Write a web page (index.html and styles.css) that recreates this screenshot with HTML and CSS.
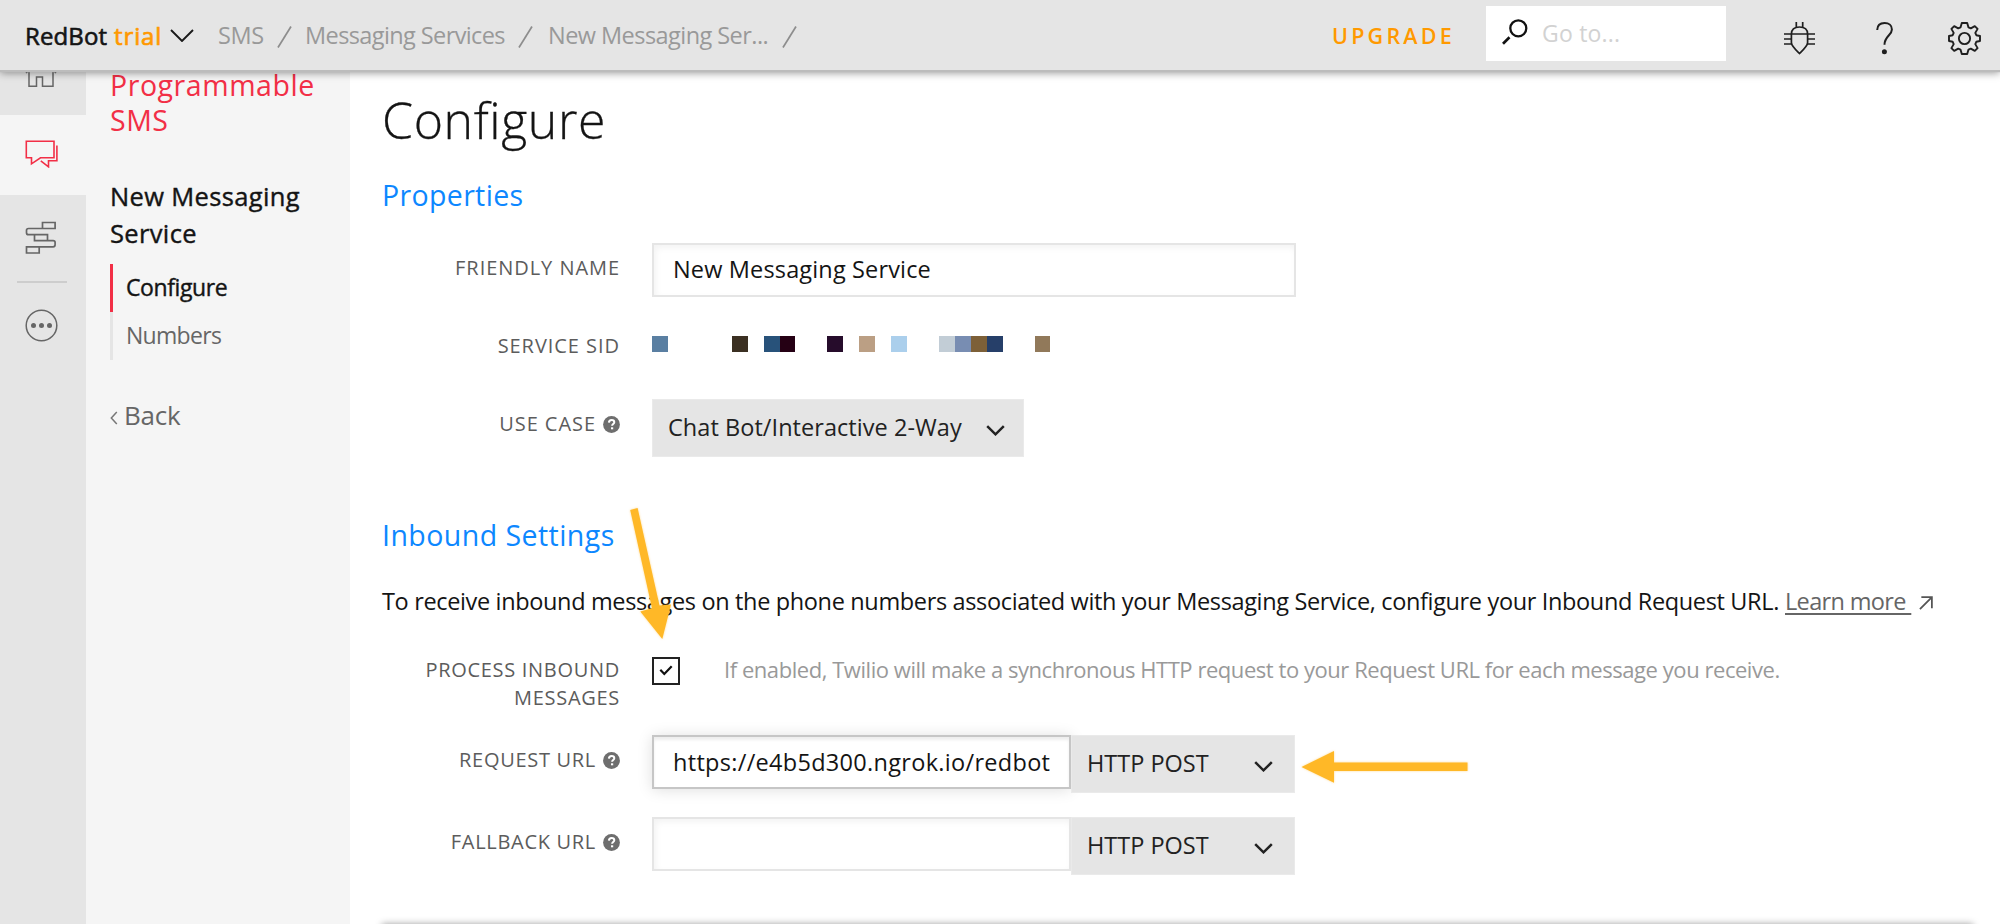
FILE: index.html
```html
<!DOCTYPE html>
<html lang="en">
<head>
<meta charset="utf-8">
<title>Configure - New Messaging Service</title>
<link rel="stylesheet" href="styles.css">
</head>
<body>
<svg class="defs" width="0" height="0" aria-hidden="true">
  <symbol id="help" viewBox="0 0 17 17"><circle cx="8.5" cy="8.5" r="8.4" fill="#6e6e6e"/><path d="M5.900 6.600C6 4.900 7 4 8.600 4c1.500 0 2.700.9 2.700 2.300 0 1.700-2.200 1.900-2.200 3.500" fill="none" stroke="#fff" stroke-width="2"/><rect x="8" y="11.300" width="2.200" height="2" fill="#fff"/></symbol>
  <symbol id="chevron" viewBox="0 0 19 11"><path d="M1.200 1.200 9.500 9.300 17.800 1.200" fill="none" stroke="#222" stroke-width="2.500"/></symbol>
</svg>

<header class="topbar">
  <div class="account"><span class="account-name">RedBot</span><span class="account-type">trial</span>
    <svg class="account-chevron" width="24" height="13" viewBox="0 0 24 13"><path d="M1 1 12 12 23 1" fill="none" stroke="#1a1a1a" stroke-width="1.900"/></svg>
  </div>
  <nav class="crumbs">
    <span class="crumb crumb-sms">SMS</span><svg class="slash" width="15" height="22"><path d="M1 21.500 14 .5"/></svg>
    <span class="crumb crumb-services">Messaging Services</span><svg class="slash" width="15" height="22"><path d="M1 21.500 14 .5"/></svg>
    <span class="crumb crumb-service">New Messaging Ser...</span><svg class="slash" width="15" height="22"><path d="M1 21.500 14 .5"/></svg>
  </nav>
  <a class="upgrade">UPGRADE</a>
  <div class="search">
    <svg width="26" height="26" viewBox="0 0 26 26" fill="none" stroke="#111" stroke-width="2.300"><circle cx="16.300" cy="9.300" r="8"/><path d="M7.500 18.200 1 24.800" stroke-width="2.700"/></svg>
    <span>Go to...</span>
  </div>
  <div class="tools">
    <svg width="31" height="33" viewBox="0 0 31 33" fill="none" stroke="#1f1f1f" stroke-width="1.700"><path d="M12.300 0v5.500M18.700 0v5.500M7.400 12C7.400 7.500 10 5 15.500 5s8.100 2.500 8.100 7v8.500c0 3.500-4.500 7.500-8.100 11-3.600-3.500-8.100-7.500-8.100-11zM0 12h31M0 17h7.400M0 22h7.400M23.600 17H31M23.600 22H31"/></svg>
    <svg width="17" height="33" viewBox="0 0 17 33"><path d="M1.200 8C1.300 3.500 4.200 1 8.600 1c4.400 0 7.300 2.600 7.300 6.400 0 6-7.400 6.600-7.400 15.300" fill="none" stroke="#1f1f1f" stroke-width="2"/><circle cx="8.400" cy="29.700" r="2.500" fill="#1f1f1f"/></svg>
    <svg width="33" height="33" viewBox="0 0 33 33" fill="none" stroke="#1f1f1f" stroke-width="1.900" stroke-linejoin="round"><path d="M13.800 1h5.400l1.300 4.400 2.300 1 4-2.300 2.800 2.800-2.300 4 1 2.300L32 14v5l-3.700.8-1 2.300 2.300 4-2.800 2.800-4-2.300-2.300 1L19.200 32h-5.400l-1.300-4.400-2.300-1-4 2.300-2.800-2.800 2.300-4-1-2.300L1 19v-5l3.700-.8 1-2.300-2.300-4 2.800-2.800 4 2.300 2.300-1z"/><circle cx="16.500" cy="16.500" r="5.600"/></svg>
  </div>
</header>

<div class="layout">
  <aside class="rail">
    <div class="rail-item rail-home"><svg width="32" height="32" viewBox="0 0 32 32" fill="none" stroke="#666" stroke-width="1.500"><path d="M1 17 16 2l15 15M4 16v14.300h7.500V21h6v9.300H28V16"/></svg></div>
    <div class="rail-item rail-active"><svg width="34" height="28" viewBox="0 0 34 28" fill="none" stroke="#f22f46" stroke-width="1.600"><path d="M1.300 1.200H29V17.800H15.500L6.500 23.800V17.800H1.300zM31.900 5.500V20.800H23.500V26.800L15.800 20.800"/></svg></div>
    <div class="rail-item rail-studio"><svg width="32" height="34" viewBox="0 0 32 34" fill="none" stroke="#666" stroke-width="1.700"><path d="M17.500 1.500h12.600v6H17.500zM17.500 7.500h-14q-2 0-2 2v2.200q0 2 2 2h18M9.500 13.700h13v5.900h-13zM22.500 19.600h5.600q2 0 2 2v2.200q0 2-2 2H14.500M1.500 25.800h12.700V32H1.500zM9.500 19.600h13"/></svg></div>
    <div class="rail-rule"></div>
    <div class="rail-item rail-more"><svg width="33" height="33" viewBox="0 0 33 33"><circle cx="16.500" cy="16.500" r="15.300" fill="none" stroke="#666" stroke-width="1.500"/><g fill="#666"><circle cx="8.500" cy="16.500" r="2.500"/><circle cx="16.500" cy="16.500" r="2.500"/><circle cx="24.500" cy="16.500" r="2.500"/></g></svg></div>
  </aside>

  <aside class="panel">
    <div class="product">Programmable<br>SMS</div>
    <div class="service">New Messaging<br>Service</div>
    <nav class="subnav">
      <a class="subnav-item is-current">Configure</a>
      <a class="subnav-item">Numbers</a>
    </nav>
    <a class="back"><svg width="8" height="14" viewBox="0 0 8 14"><path d="M6.800 1 1.300 7l5.500 6" fill="none" stroke="#777" stroke-width="1.500"/></svg>Back</a>
  </aside>

  <main class="content">
    <h1>Configure</h1>
    <h2 class="h-properties">Properties</h2>
    <div class="form">
      <div class="row">
        <label>FRIENDLY NAME</label>
        <div class="input input-wide">New Messaging Service</div>
      </div>
      <div class="row">
        <label>SERVICE SID</label>
        <div class="sid">
          <i class="c0"></i><i class="c5"></i><i class="c7"></i><i class="c8"></i><i class="c11"></i><i class="c13"></i><i class="c15"></i><i class="c18"></i><i class="c19"></i><i class="c20"></i><i class="c21"></i><i class="c24"></i>
        </div>
      </div>
      <div class="row">
        <label>USE CASE<svg class="help"><use href="#help"/></svg></label>
        <div class="select select-case">Chat Bot/Interactive 2-Way<svg class="chev"><use href="#chevron"/></svg></div>
      </div>
    </div>

    <h2 class="h-inbound">Inbound Settings</h2>
    <p class="intro"><span class="intro-text">To receive inbound messages on the phone numbers associated with your Messaging Service, configure your Inbound Request URL.</span><a class="learn">Learn more&nbsp;</a><svg width="14" height="14" viewBox="0 0 15 15" fill="none" stroke="#555" stroke-width="1.900"><path d="M1 14 13.600 1.400M2.500 1.200h11.300V13"/></svg></p>

    <div class="form">
      <div class="row row-process">
        <label>PROCESS INBOUND<br>MESSAGES</label>
        <div class="check-line">
          <span class="checkbox"><svg width="14" height="11" viewBox="0 0 14 11"><path d="M1.300 4.800 5.300 9 12.700 1.300" fill="none" stroke="#111" stroke-width="2.200"/></svg></span>
          <span class="hint">If enabled, Twilio will make a synchronous HTTP request to your Request URL for each message you receive.</span>
        </div>
      </div>
      <div class="row row-url">
        <label>REQUEST URL<svg class="help"><use href="#help"/></svg></label>
        <div class="combo">
          <div class="input input-url is-focused">https://e4b5d300.ngrok.io/redbot</div>
          <div class="select select-method">HTTP POST<svg class="chev"><use href="#chevron"/></svg></div>
        </div>
      </div>
      <div class="row row-url">
        <label>FALLBACK URL<svg class="help"><use href="#help"/></svg></label>
        <div class="combo">
          <div class="input input-url"></div>
          <div class="select select-method">HTTP POST<svg class="chev"><use href="#chevron"/></svg></div>
        </div>
      </div>
    </div>
    <div class="next-card"></div>
  </main>
</div>

<svg class="callouts" width="2000" height="924" viewBox="0 0 2000 924" fill="#ffb827"><path d="M630.200 510 637.600 508 659.500 605.500 671 604.500 662.300 639 640.300 611.500 652 608.300z"/><path d="M1301.500 767 1334 751v11.500h133.500v8.500H1334v11.700z"/></svg>
</body>
</html>
```
FILE: styles.css
```css
* { box-sizing: border-box; }
body {
  margin: 0;
  width: 2000px;
  height: 924px;
  overflow: hidden;
  position: relative;
  background: #fff;
  color: #141414;
  font-family: "Open Sans", "Noto Sans", sans-serif;
}
svg { display: block; flex: none; }
.defs { position: absolute; }

/* Top bar */
.topbar {
  position: relative;
  z-index: 2;
  display: flex;
  align-items: center;
  height: 70px;
  padding-left: 25px;
  background: #e5e5e5;
  box-shadow: 0 2px 1px #bcbcbc, 0 3px 8px rgba(0, 0, 0, .4);
  white-space: nowrap;
}
.account { display: flex; align-items: center; width: 193px; font-size: 24px; -webkit-text-stroke: .6px; }
.account-name { width: 89px; letter-spacing: .1px; }
.account-type { width: 56px; color: #ff9900; letter-spacing: .9px; -webkit-text-stroke: .7px #ff9900; }
.account-chevron { margin-top: 1px; }
.crumbs { display: flex; align-items: center; width: 1114px; font-size: 23.500px; color: #999; }
.crumb-sms { width: 59px; letter-spacing: -.4px; }
.crumb-services { width: 213px; margin-left: 13px; letter-spacing: -.6px; }
.crumb-service { width: 234px; margin-left: 15px; letter-spacing: -.55px; }
.slash { fill: none; stroke: #8d8d8d; stroke-width: 1.700; margin-top: 3px; }
.upgrade { width: 154px; font-size: 21.500px; font-weight: 600; letter-spacing: 3.200px; color: #ff9900; }
.search { display: flex; width: 240px; height: 55px; margin-top: -4px; padding: 13px 0 0 16px; background: #fff; color: #d2d2d2; font-size: 23px; line-height: 30px; letter-spacing: .2px; }
.search span { margin: -1px 0 0 14px; }
.tools { display: flex; margin: 6px 0 0 58px; }
.tools svg + svg { margin-left: 61px; }
.tools svg:last-child { margin-left: 54.500px; }

/* Columns */
.layout { display: flex; height: 854px; }
.rail { display: flex; flex-direction: column; width: 86px; background: #e5e5e5; }
.rail-item { display: flex; justify-content: center; padding-right: 4px; }
.rail-home { height: 45px; align-items: flex-end; padding-bottom: 27px; }
.rail-active { height: 80px; padding: 25px 3px 0 0; background: #f5f5f5; }
.rail-studio { height: 86px; padding-top: 26px; }
.rail-rule { flex: none; width: 50px; height: 2px; margin-left: 17px; background: #cdcdcd; }
.rail-more { padding-top: 26px; }

.panel { width: 264px; padding-left: 24px; background: #f5f5f5; }
.product { margin-top: -2px; color: #f22f46; font-size: 28.500px; line-height: 35px; letter-spacing: .55px; }
.service { margin-top: 40px; font-size: 25.500px; line-height: 36.500px; letter-spacing: .35px; -webkit-text-stroke: .4px; }
.subnav { margin-top: 12.500px; font-size: 23px; }
.subnav-item { display: block; height: 48px; padding-left: 13px; border-left: 3px solid #e5e5e5; line-height: 47px; letter-spacing: -.7px; color: #666; }
.subnav-item.is-current { border-left-color: #f22f46; color: #141414; letter-spacing: -.4px; -webkit-text-stroke: .4px; }
.back { display: flex; align-items: center; gap: 6px; margin-top: 37px; font-size: 26px; line-height: 36px; letter-spacing: -.2px; color: #666; }
.back svg { margin-top: 7px; }

/* Content */
.content { width: 1650px; padding-left: 32px; }
h1, h2, p { margin: 0; font-weight: 400; }
h1 { margin-top: 20px; font-size: 50px; line-height: 60px; font-weight: 300; letter-spacing: .6px; -webkit-text-stroke: .3px; }
h2 { font-size: 28.500px; line-height: 36px; color: #0d87ff; letter-spacing: .35px; }
.h-properties { margin-top: 27px; }
.h-inbound { margin-top: 60px; letter-spacing: .45px; }
.form { display: grid; gap: 24px; }
.h-properties + .form { margin-top: 30px; }
.row { display: grid; grid-template-columns: 238px 1fr; column-gap: 32px; min-height: 54px; }
.row label { display: block; padding-top: 10.500px; text-align: right; font-size: 20px; line-height: 27.500px; letter-spacing: .95px; color: #5c5c5c; white-space: nowrap; }
.row-url label { letter-spacing: .7px; }
.help { display: inline-block; width: 17px; height: 17px; margin-left: 7px; vertical-align: -2px; }
.input { height: 54px; padding-left: 19px; border: 2px solid #e5e5e5; background: #fff; box-shadow: inset 2px 3px 6px rgba(0, 0, 0, .05); font-size: 23.500px; line-height: 48px; letter-spacing: .15px; white-space: nowrap; overflow: hidden; }
.input-wide { width: 644px; }
.input-url { width: 419px; letter-spacing: .3px; }
.input-url.is-focused { border-color: #c6c6c6; box-shadow: 0 1px 14px rgba(0, 0, 0, .13), inset 0 3px 3px rgba(0, 0, 0, .07); line-height: 50px; }
.combo { display: flex; }
.select { display: flex; justify-content: space-between; align-items: center; background: #e5e5e5; border: 1px solid #eaeaea; font-size: 23.500px; color: #222; white-space: nowrap; z-index: 1; }
.chev { width: 19px; height: 11px; margin-top: 7px; }
.select-case { width: 372px; height: 58px; padding: 0 18px 2px 15px; letter-spacing: .05px; }
.select-method { width: 224px; height: 58px; padding: 0 21px 2px 15px; }

.sid { display: grid; grid-template-columns: repeat(25, 15.950px); height: 16px; margin-top: 15px; }
.sid i { grid-row: 1; height: 16px; }
.c0 { grid-column: 1; background: #5a7fa2; }
.c5 { grid-column: 6; background: #3b3022; }
.c7 { grid-column: 8; background: #28527a; }
.c8 { grid-column: 9; background: #250014; }
.c11 { grid-column: 12; background: #260c2b; }
.c13 { grid-column: 14; background: #bb9f84; }
.c15 { grid-column: 16; background: #abcfec; }
.c18 { grid-column: 19; background: #c2cdd6; }
.c19 { grid-column: 20; background: #788db2; }
.c20 { grid-column: 21; background: #7d6038; }
.c21 { grid-column: 22; background: #263f69; }
.c24 { grid-column: 25; background: #91795a; }

.intro { display: flex; align-items: center; margin-top: 32px; font-size: 23.500px; line-height: 32px; white-space: nowrap; }
.intro-text { width: 1403px; letter-spacing: -.35px; }
.learn { width: 125px; margin-right: 9px; color: #666; letter-spacing: -.65px; text-decoration: underline; text-decoration-thickness: 2px; text-underline-offset: 3px; }
.intro svg { margin-top: 3px; }
.intro + .form { margin-top: 28.500px; }
.row-process { height: 65.500px; }
.row-process label { letter-spacing: .7px; }
.check-line { display: flex; align-items: flex-start; }
.checkbox { display: grid; place-items: center; width: 28px; height: 28px; margin: 11px 44px 0 0; border: 2px solid #222; }
.hint { margin-top: 10px; font-size: 22px; line-height: 27.500px; letter-spacing: -.45px; color: #999; white-space: nowrap; }
.next-card { width: 1591px; height: 20px; margin-top: 49px; background: #fff; box-shadow: 0 0 7px rgba(0, 0, 0, .38); }

.callouts { position: absolute; top: 0; left: 0; z-index: 3; pointer-events: none; filter: drop-shadow(0 0 1px rgba(255, 184, 39, .5)); }
```
